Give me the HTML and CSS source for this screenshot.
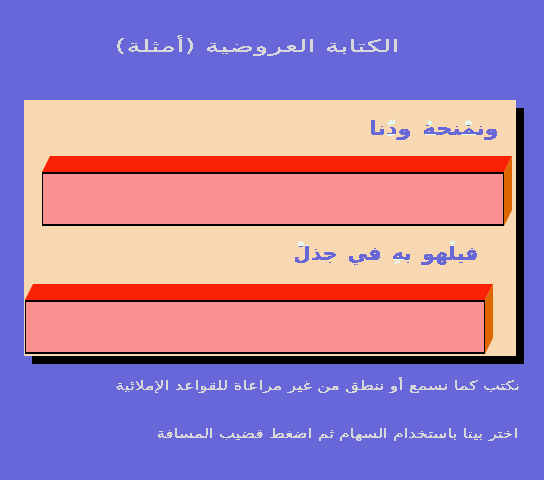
FILE: index.html
```html
<!DOCTYPE html>
<html lang="ar">
<head>
  <meta charset="UTF-8" />
  <title>الكتابة العروضية</title>
  <link rel="stylesheet" href="styles.css">
</head>
<body>

<svg class="defs" width="0" height="0" aria-hidden="true">
  <filter id="crisp" x="-5%" y="-20%" width="110%" height="140%">
    <feComponentTransfer>
      <feFuncA type="discrete" tableValues="0 1 1"/>
    </feComponentTransfer>
  </filter>
</svg>

<h1 class="title"><span>الكتابة العروضية (أمثلة)</span></h1>

<div class="panel">
  <p class="verse verse-one"><span>ون<b>مْ</b>نح<b>هُ</b> و<b>دّ</b>نا</span></p>
  <div class="bar bar-one"></div>
  <p class="verse verse-two"><span>في<b class="tall">لْ</b>هو ب<b>هِ</b> في جذ<b class="tall">لْ</b></span></p>
  <div class="bar bar-two"></div>
</div>

<p class="hint hint-one"><span>نكتب كما نسمع أو ننطق من غير مراعاة للقواعد الإملائية</span></p>
<p class="hint hint-two"><span>اختر بيتا باستخدام السهام ثم اضغط قضيب المسافة</span></p>

</body>
</html>
```

FILE: styles.css
```css
* { box-sizing: border-box; }
html, body { height: 100%; }
body {
  margin: 0;
  background-color: #6767d9;
  color: #d8d8d8;
  font-family: 'DejaVu Sans', sans-serif;
  overflow: hidden;
}
.defs { position: absolute; }
p, h1 { margin: 0; font-weight: normal; direction: rtl; }
p span, h1 span {
  display: inline-block;
  white-space: nowrap;
  transform-origin: right center;
  filter: url(#crisp);
}
.title {
  height: 100px;
  padding: 31px 144px 0 0;
  font-size: 17px;
  line-height: 30px;
}
.title span { transform: scaleX(1.72); }
.panel {
  width: 492px;
  height: 256px;
  margin-left: 24px;
  background-color: #f8d8b0;
  box-shadow: 8px 8px 0 #000;
  display: flow-root;
}
.verse {
  color: #6767d9;
  font-size: 20px;
  font-weight: bold;
  line-height: 30px;
  word-spacing: 3px;
}
/* letter and its mark share one box, the band colours only the mark */
.verse b {
  color: transparent;
  background: linear-gradient(#e0ffff 38%, #6767d9 38%, #6767d9 76%, #e0ffff 76%);
  -webkit-background-clip: text;
  background-clip: text;
}
.verse b.tall {
  background: linear-gradient(#e0ffff 20%, #6767d9 20%);
  -webkit-background-clip: text;
  background-clip: text;
}
.verse-one { height: 72px; padding: 13px 17px 0 0; }
.verse-one span { transform: scaleX(1.12); }
.verse-two { height: 74px; padding: 12px 38px 0 0; }
.verse-two span { transform: scaleX(1.02); }
.bar {
  position: relative;
  height: 54px;
  background-color: #fa9090;
  border: solid #000;
  border-width: 2px 1px;
}
.bar::before {
  content: "";
  position: absolute;
  left: -1px;
  right: -9px;
  top: -18px;
  height: 16px;
  background-color: #fa2105;
  clip-path: polygon(8px 0, 100% 0, calc(100% - 8px) 100%, 0 100%);
}
.bar::after {
  content: "";
  position: absolute;
  left: 100%;
  margin-left: 1px;
  top: -18px;
  width: 8px;
  height: 70px;
  background-color: #de6600;
  clip-path: polygon(100% 0, 100% 54px, 0 100%, 0 16px);
}
.bar-one { width: 462px; margin-left: 18px; }
.bar-two { width: 460px; margin-left: 1px; }
.hint { font-size: 13px; line-height: 20px; }
.hint-one { padding: 20px 24px 0 0; }
.hint-one span { transform: scaleX(1.34); }
.hint-two { padding: 28px 26px 0 0; }
.hint-two span { transform: scaleX(1.305); }
```
